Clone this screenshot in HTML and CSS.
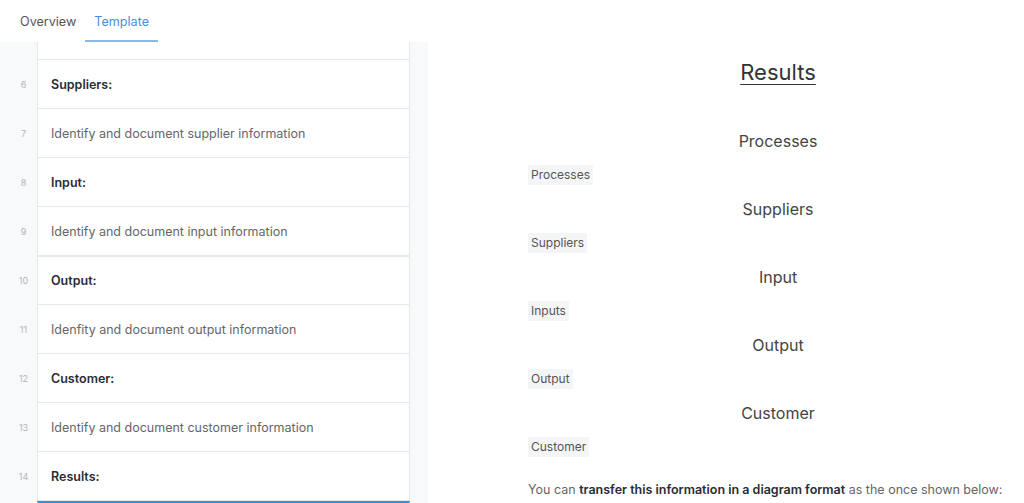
FILE: index.html
```html
<!DOCTYPE html>
<html lang="en">
<head>
  <meta charset="UTF-8" />
  <meta name="viewport" content="width=device-width, initial-scale=1.0" />
  <title>Template</title>
  <link rel="stylesheet" href="styles.css">
</head>
<body>

  <nav class="tabs">
    <a class="tab">Overview</a>
    <a class="tab active">Template</a>
  </nav>

  <div class="workspace">
    <div class="editor">
      <div class="line partial">
        <span class="num"></span>
        <div class="cell"></div>
      </div>
      <div class="line">
        <span class="num">6</span>
        <div class="cell head">Suppliers:</div>
      </div>
      <div class="line">
        <span class="num">7</span>
        <div class="cell">Identify and document supplier information</div>
      </div>
      <div class="line">
        <span class="num">8</span>
        <div class="cell head">Input:</div>
      </div>
      <div class="line">
        <span class="num">9</span>
        <div class="cell">Identify and document input information</div>
      </div>
      <div class="line">
        <span class="num">10</span>
        <div class="cell head thick">Output:</div>
      </div>
      <div class="line">
        <span class="num">11</span>
        <div class="cell">Idenfity and document output information</div>
      </div>
      <div class="line">
        <span class="num">12</span>
        <div class="cell head">Customer:</div>
      </div>
      <div class="line">
        <span class="num">13</span>
        <div class="cell">Identify and document customer information</div>
      </div>
      <div class="line">
        <span class="num">14</span>
        <div class="cell head">Results:</div>
      </div>
      <div class="line">
        <span class="num"></span>
        <div class="cell selected"></div>
      </div>
    </div>

    <div class="preview">
      <h1>Results</h1>

      <div class="section">
        <h3>Processes</h3>
        <code>Processes</code>
      </div>
      <div class="section">
        <h3>Suppliers</h3>
        <code>Suppliers</code>
      </div>
      <div class="section">
        <h3>Input</h3>
        <code>Inputs</code>
      </div>
      <div class="section">
        <h3>Output</h3>
        <code>Output</code>
      </div>
      <div class="section">
        <h3>Customer</h3>
        <code>Customer</code>
      </div>

      <p>You can <b>transfer this information in a diagram format</b> as the once shown below:</p>
    </div>
  </div>

</body>
</html>
```

FILE: styles.css
```css
body {
  margin: 0;
  font-family: Inter, 'Noto Sans', sans-serif;
  color: #333;
  background: #fff;
  height: 503px;
  overflow: hidden;
}

.tabs {
  height: 42px;
  display: flex;
  align-items: stretch;
  padding-left: 11px;
  box-sizing: border-box;
}

.tab {
  display: flex;
  align-items: center;
  padding: 2px 9px 0;
  font-size: 12.6px;
  color: #555;
  border-bottom: 2px solid transparent;
  box-sizing: border-box;
}

.tab.active {
  color: #4a8fd8;
  border-bottom-color: #8ab8e8;
}

.workspace {
  display: flex;
  height: 461px;
}

.editor {
  width: 428px;
  flex-shrink: 0;
  background: #f8f9fb;
  padding-right: 18px;
  box-sizing: border-box;
}

.line {
  display: flex;
  height: 49px;
}

.line.partial {
  height: 18px;
}

.num {
  width: 37px;
  flex-shrink: 0;
  font-size: 9px;
  color: #b0b4ba;
  display: flex;
  align-items: center;
  justify-content: center;
  padding-left: 10px;
  box-sizing: border-box;
}

.cell {
  flex: 1;
  background: #fff;
  border-left: 1px solid #e6e8eb;
  border-right: 1px solid #e6e8eb;
  border-bottom: 1px solid #e6e8eb;
  display: flex;
  align-items: center;
  padding-left: 13px;
  font-size: 12.5px;
  color: #666;
}

.cell.head {
  font-weight: 600;
  color: #2a2d35;
}

.cell.thick {
  border-top: 1px solid #e6e8eb;
}

.cell.selected {
  border-top: 3px solid #2196f3;
}

.preview {
  flex: 1;
  padding: 15px 0 0 100px;
  min-width: 500px;
}

.preview h1 {
  margin: 0 0 42px;
  width: 500px;
  text-align: center;
  font-size: 22px;
  line-height: 30px;
  font-weight: 400;
  color: #333;
  text-decoration: underline;
  text-decoration-thickness: 1px;
  text-underline-offset: 4px;
}

.section {
  width: 500px;
  padding-bottom: 12px;
}

.section h3 {
  margin: 0 0 12px;
  text-align: center;
  font-size: 16px;
  line-height: 24px;
  font-weight: 400;
  color: #444;
}

.section code {
  display: block;
  width: fit-content;
  font-family: Inter, 'Noto Sans', sans-serif;
  font-size: 12px;
  line-height: 20px;
  padding: 0 3px;
  background: #f4f5f7;
  color: #555;
}

.preview p {
  margin: 11px 0 0;
  width: 500px;
  font-size: 12.5px;
  line-height: 20px;
  color: #666;
  white-space: nowrap;
}

.preview p b {
  font-weight: 600;
  color: #2a2d35;
}
```
